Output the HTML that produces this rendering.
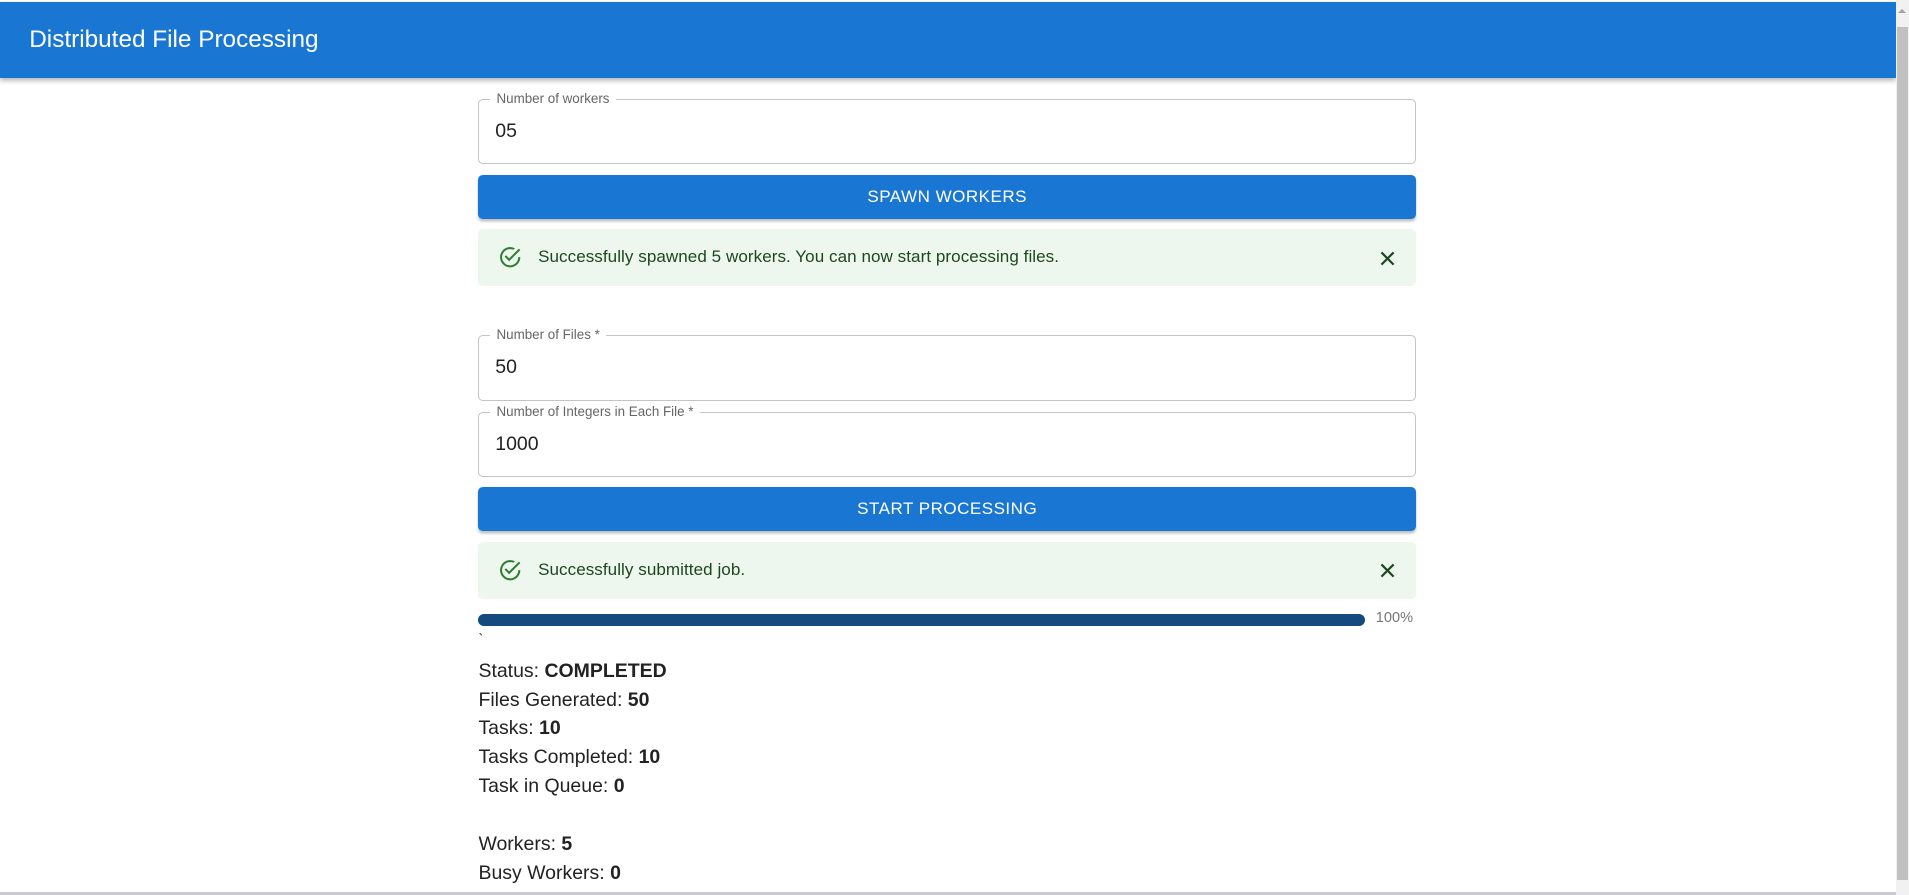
<!DOCTYPE html>
<html><head><meta charset="utf-8"><style>
html,body{margin:0;padding:0;overflow:hidden;background:#fff}
#root{zoom:1.21747;width:1568px;height:735px;position:relative;font-family:"Liberation Sans",Arial,sans-serif;color:#222}
.hdr{position:absolute;left:0;top:2px;width:1557px;height:62px;background:#1976d2;box-shadow:0 2px 4px rgba(0,0,0,.3);color:#fff;font-size:20px;line-height:62px;padding-left:24px;box-sizing:border-box}
.sb{position:absolute;left:1557px;top:0;width:11px;height:735px;background:#f1f1f1}
.sb .th{position:absolute;left:1px;right:1px;top:22px;bottom:12px;background:#c1c1c1}
.sb .ar{position:absolute;left:2px;top:7px;width:0;height:0;border-left:4px solid transparent;border-right:4px solid transparent;border-bottom:4px solid #a3a3a3}
.bot{position:absolute;left:0;top:733px;width:1557px;height:2px;background:#c9c9d0}
.f{position:absolute;left:393px;width:770px;height:54px;border:1px solid #c4c4c4;border-radius:4px;box-sizing:border-box}
.f .l{position:absolute;left:9px;top:-8px;background:#fff;padding:0 5px;font-size:11px;color:#666;line-height:14px}
.f .v{position:absolute;left:13px;top:17px;font-size:16px;color:#222}
.b{position:absolute;left:393px;width:770px;height:36px;background:#1976d2;color:#fff;border-radius:4px;text-align:center;line-height:36px;font-size:14px;letter-spacing:.4px;box-shadow:0 2px 2px rgba(0,0,0,.25)}
.a{position:absolute;left:393px;width:770px;height:47px;background:#edf7ed;border-radius:4px;font-size:14px;color:#1e4620}
.a .t{position:absolute;left:49px;top:15px;letter-spacing:.05px}
.a svg.c{position:absolute;left:16px;top:13px}
.a svg.x{position:absolute;left:740px;top:17px}
.s{position:absolute;left:393px;font-size:16px;color:#222;line-height:20px}
</style></head><body><div id="root">
<div class="hdr">Distributed File Processing</div>
<div class="sb"><div class="ar"></div><div class="th"></div></div>

<div class="f" style="top:81px"><div class="l">Number of workers</div><div class="v">05</div></div>
<div class="b" style="top:144px">SPAWN WORKERS</div>
<div class="a" style="top:188px"><svg class="c" width="20" height="20" viewBox="0 0 24 24"><path fill="#2e7d32" d="M20 12a8 8 0 1 1-4.8-7.3l1.5-1.5A10 10 0 1 0 22 12h-2zM7.9 10.1 6.5 11.5 11 16 22 5l-1.4-1.4L11 13.2z"/></svg><div class="t">Successfully spawned 5 workers. You can now start processing files.</div><svg class="x" width="14" height="14" viewBox="0 0 14 14"><path d="M2 2 12 12M12 2 2 12" stroke="#1e4620" stroke-width="1.8"/></svg></div>

<div class="f" style="top:275px"><div class="l">Number of Files *</div><div class="v">50</div></div>
<div class="f" style="top:338px"><div class="l">Number of Integers in Each File *</div><div class="v">1000</div></div>
<div class="b" style="top:400px">START PROCESSING</div>
<div class="a" style="top:445px"><svg class="c" width="20" height="20" viewBox="0 0 24 24"><path fill="#2e7d32" d="M20 12a8 8 0 1 1-4.8-7.3l1.5-1.5A10 10 0 1 0 22 12h-2zM7.9 10.1 6.5 11.5 11 16 22 5l-1.4-1.4L11 13.2z"/></svg><div class="t">Successfully submitted job.</div><svg class="x" width="14" height="14" viewBox="0 0 14 14"><path d="M2 2 12 12M12 2 2 12" stroke="#1e4620" stroke-width="1.8"/></svg></div>

<div style="position:absolute;left:393px;top:504px;width:728px;height:10px;border-radius:5px;background:#154a7e"></div>
<div style="position:absolute;left:1130px;top:501px;font-size:12px;color:#777">100%</div>
<div class="s" style="top:516px;font-size:12px">`</div>

<div class="s" style="top:541px">Status: <b>COMPLETED</b></div>
<div class="s" style="top:565px">Files Generated: <b>50</b></div>
<div class="s" style="top:588px">Tasks: <b>10</b></div>
<div class="s" style="top:612px">Tasks Completed: <b>10</b></div>
<div class="s" style="top:636px">Task in Queue: <b>0</b></div>
<div class="s" style="top:683px">Workers: <b>5</b></div>
<div class="s" style="top:707px">Busy Workers: <b>0</b></div>
<div class="bot"></div>
</div></body></html>
